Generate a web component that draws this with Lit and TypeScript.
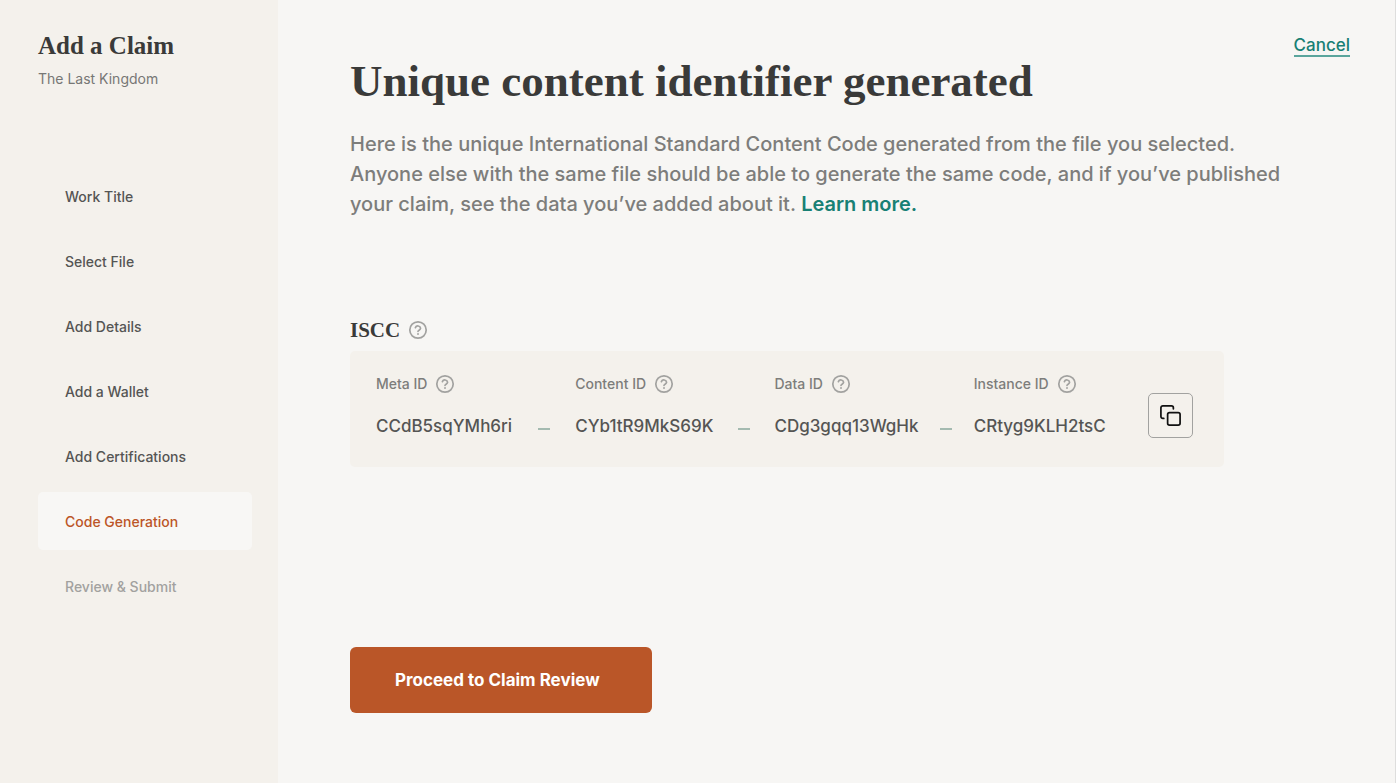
import { LitElement, html, css, svg } from "lit";
import { customElement, property } from "lit/decorators.js";
import { classMap } from "lit/directives/class-map.js";

@customElement("help-button")
class HelpButton extends LitElement {
  @property() label = "";

  static styles = css`
    :host {
      display: inline-flex;
    }
    .help {
      display: flex;
      padding: 0;
      border: 0;
      background: none;
      color: #a2a2a0;
      cursor: pointer;
    }
    .icon {
      display: block;
      width: 20px;
      height: 20px;
    }
  `;

  render() {
    return html`<button class="help" type="button" aria-label=${this.label}>
      <svg class="icon" viewBox="0 0 20 20" fill="none" stroke="currentColor" stroke-width="1.7" stroke-linecap="round" stroke-linejoin="round" aria-hidden="true">
        <circle cx="10" cy="10" r="8.2"></circle>
        <path d="M7.4 7.6 A2.7 2.6 0 0 1 12.6 8.3 C12.6 10 10.1 10.3 10 11.4"></path>
        <path d="M10 14 h.01" stroke-width="1.9"></path>
      </svg>
    </button>`;
  }
}

interface Step {
  name: string;
  state: "done" | "current" | "upcoming";
}

const steps: Step[] = [
  { name: "Work Title", state: "done" },
  { name: "Select File", state: "done" },
  { name: "Add Details", state: "done" },
  { name: "Add a Wallet", state: "done" },
  { name: "Add Certifications", state: "done" },
  { name: "Code Generation", state: "current" },
  { name: "Review & Submit", state: "upcoming" },
];

const parts = [
  { name: "Meta ID", code: "CCdB5sqYMh6ri" },
  { name: "Content ID", code: "CYb1tR9MkS69K" },
  { name: "Data ID", code: "CDg3gqq13WgHk" },
  { name: "Instance ID", code: "CRtyg9KLH2tsC" },
];

const copyIcon = svg`
  <rect x="9" y="9" width="13" height="13" rx="2"></rect>
  <path d="M5 15H4a2 2 0 0 1-2-2V4a2 2 0 0 1 2-2h9a2 2 0 0 1 2 2v1"></path>
`;

@customElement("app-root")
class AppRoot extends LitElement {
  static styles = css`
    :host {
      display: block;
      color: #555554;
      font-family: Inter, "Liberation Sans", sans-serif;
      font-weight: 500;
    }
    * {
      box-sizing: border-box;
    }
    h1,
    h2,
    p,
    ol,
    dl,
    dd {
      margin: 0;
      padding: 0;
    }
    .page {
      display: flex;
      min-height: 100vh;
      background: #f7f6f4;
      border-right: 1px solid #dededd;
    }
    .sidebar {
      flex: 0 0 278px;
      padding: 30px 26px 30px 38px;
      background: #f4f1ec;
    }
    .serif {
      color: #3a3a39;
      font-family: "Liberation Serif", serif;
      font-weight: 700;
    }
    .flow-title {
      font-size: 25px;
      line-height: 32px;
    }
    .work {
      margin-top: 7px;
      color: #777775;
      font-size: 14px;
      line-height: 20px;
      font-weight: 400;
    }
    .steps {
      display: flex;
      flex-direction: column;
      gap: 7px;
      margin-top: 78px;
      list-style: none;
    }
    .step {
      display: flex;
      align-items: center;
      height: 58px;
      padding: 0 27px;
      border-radius: 5px;
      color: inherit;
      font-size: 14px;
      text-decoration: none;
      white-space: nowrap;
    }
    .step.current {
      background: #f8f7f5;
      color: #bc5527;
    }
    .step.upcoming {
      color: #a2a19f;
    }
    .main {
      flex: 1;
      display: flex;
      align-items: flex-start;
      justify-content: space-between;
      padding: 36px 45px 70px 72px;
    }
    .content {
      flex: 0 1 940px;
      padding-top: 19px;
    }
    .title {
      font-size: 45px;
      line-height: 52px;
    }
    .intro {
      margin-top: 22px;
      color: #7d7d7b;
      font-size: 20px;
      line-height: 30px;
    }
    .learn {
      color: #188074;
      font-weight: 600;
      text-decoration: none;
    }
    .cancel {
      border-bottom: 2px solid #5aa59c;
      color: #188074;
      font-size: 17px;
      line-height: 19px;
      text-decoration: none;
    }
    .code-head {
      display: flex;
      align-items: center;
      gap: 8px;
      margin-top: 98px;
    }
    .code-title {
      font-size: 21px;
      line-height: 26px;
    }
    .panel {
      display: flex;
      align-items: flex-start;
      max-width: 874px;
      margin-top: 8px;
      padding: 22px 31px 28px 26px;
      border-radius: 5px;
      background: #f4f1ec;
    }
    .parts {
      flex: 1;
      display: grid;
      grid-template-columns: repeat(3, 8fr) 7fr;
    }
    .part-name {
      display: flex;
      align-items: center;
      gap: 8px;
      color: #7d7d7b;
      font-size: 14px;
      line-height: 22px;
    }
    .part-code {
      display: flex;
      align-items: center;
      margin-top: 18px;
      font-size: 17px;
      line-height: 26px;
    }
    .dash {
      width: 12px;
      height: 2px;
      margin: 6px auto 0;
      background: #a4bab0;
    }
    .copy {
      display: grid;
      place-items: center;
      width: 45px;
      height: 45px;
      margin-top: 20px;
      padding: 0;
      border: 1px solid #a2a2a0;
      border-radius: 5px;
      background: none;
      color: #111;
      cursor: pointer;
    }
    .copy-icon {
      width: 23px;
      height: 23px;
    }
    .proceed {
      margin-top: 180px;
      padding: 20px 52px 20px 45px;
      border: 0;
      border-radius: 6px;
      background: #ba5628;
      color: #fff;
      font: 700 17px/26px Inter, "Liberation Sans", sans-serif;
      cursor: pointer;
    }
  `;

  render() {
    return html`
      <div class="page">
        <aside class="sidebar">
          <h2 class="serif flow-title">Add a Claim</h2>
          <p class="work">The Last Kingdom</p>
          <nav aria-label="Claim steps">
            <ol class="steps">
              ${steps.map(
                (s) => html`<li>
                  <a
                    class=${classMap({ step: true, [s.state]: true })}
                    href="#"
                    aria-current=${s.state === "current" ? "step" : "false"}
                    >${s.name}</a
                  >
                </li>`
              )}
            </ol>
          </nav>
        </aside>
        <main class="main">
          <div class="content">
            <h1 class="serif title">Unique content identifier generated</h1>
            <p class="intro">
              Here is the unique International Standard Content Code generated from the file you
              selected. Anyone else with the same file should be able to generate the same code, and
              if you’ve published your claim, see the data you’ve added about it.
              <a class="learn" href="#">Learn more.</a>
            </p>
            <div class="code-head">
              <h2 class="serif code-title">ISCC</h2>
              <help-button label="About the ISCC"></help-button>
            </div>
            <div class="panel">
              <dl class="parts">
                ${parts.map(
                  (p, i) => html`<div>
                    <dt class="part-name">
                      ${p.name}<help-button label="About the ${p.name}"></help-button>
                    </dt>
                    <dd class="part-code">
                      <span>${p.code}</span>
                      ${i < parts.length - 1 ? html`<span class="dash"></span>` : ""}
                    </dd>
                  </div>`
                )}
              </dl>
              <button class="copy" type="button" aria-label="Copy code">
                <svg class="copy-icon" viewBox="0 0 24 24" fill="none" stroke="currentColor" stroke-width="1.8" stroke-linecap="round" stroke-linejoin="round" aria-hidden="true">
                  ${copyIcon}
                </svg>
              </button>
            </div>
            <button class="proceed" type="button">Proceed to Claim Review</button>
          </div>
          <a class="cancel" href="#">Cancel</a>
        </main>
      </div>
    `;
  }
}
